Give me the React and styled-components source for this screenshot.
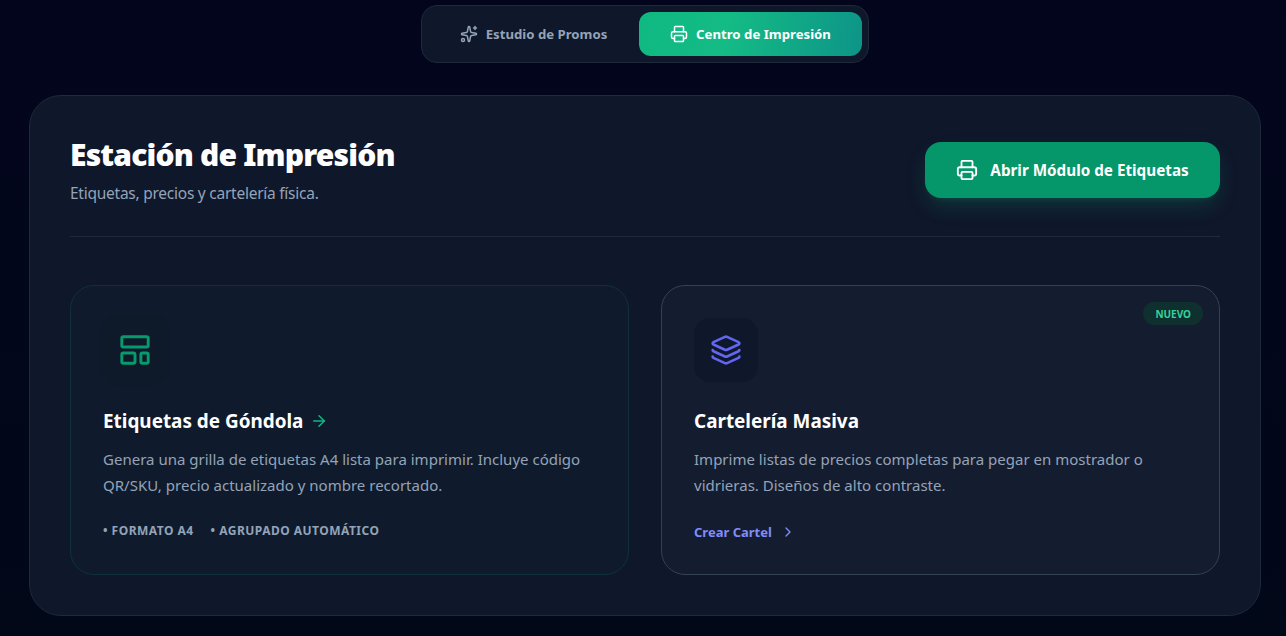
import React from "react";
import styled, { createGlobalStyle } from "styled-components";
import { Sparkles, Printer, Layers, ArrowRight, ChevronRight } from "lucide-react";

const GlobalStyle = createGlobalStyle`
  html, body {
    margin: 0;
    padding: 0;
    height: 100%;
    background: linear-gradient(180deg, #03051d 0%, #010818 100%);
    font-family: "Noto Sans", "Open Sans", sans-serif;
    overflow: hidden;
  }
  * { box-sizing: border-box; }
`;

const Page = styled.div`
  height: 636px;
  padding: 5px 25px 0 29px;
  display: flex;
  flex-direction: column;
  align-items: center;
`;

const Tabs = styled.nav`
  width: 448px;
  height: 58px;
  padding: 6px;
  display: flex;
  border: 1px solid #1e293b;
  border-radius: 16px;
  background: #0f172a;
`;

const Tab = styled.button`
  flex: ${(p) => (p.$active ? "0 0 223px" : "1")};
  display: flex;
  align-items: center;
  justify-content: center;
  gap: 8px;
  border: 0;
  border-radius: 12px;
  font: 700 13.2px "Noto Sans", sans-serif;
  color: ${(p) => (p.$active ? "#fff" : "#94a3b8")};
  background: ${(p) => (p.$active ? "linear-gradient(100deg, #10b981 0%, #14bb85 40%, #0d9488 100%)" : "transparent")};
`;

const Panel = styled.main`
  width: 1232px;
  height: 521px;
  margin-top: 32px;
  padding: 40px;
  border: 1px solid #1e293b;
  border-radius: 32px;
  background: #0f172a;
`;

const Header = styled.header`
  height: 101px;
  padding-top: 6px;
  display: flex;
  justify-content: space-between;
  align-items: flex-start;
  border-bottom: 1px solid #1e293b;
`;

const Title = styled.h1`
  margin: -5px 0 0;
  font-size: 30px;
  line-height: 36px;
  font-weight: 900;
  letter-spacing: -0.82px;
  color: #fff;
`;

const Subtitle = styled.p`
  margin: 8px 0 0;
  font-size: 15.5px;
  line-height: 24px;
  letter-spacing: -0.25px;
  color: #94a3b8;
`;

const PrimaryButton = styled.button`
  width: 295px;
  height: 56px;
  display: flex;
  align-items: center;
  justify-content: center;
  gap: 12px;
  border: 0;
  border-radius: 16px;
  background: #059669;
  color: #fff;
  font: 700 15.25px "Noto Sans", sans-serif;
  box-shadow: 0 10px 22px -3px rgba(16, 185, 129, 0.2), 0 4px 6px -4px rgba(16, 185, 129, 0.2);
`;

const Cards = styled.section`
  margin-top: 48px;
  display: grid;
  grid-template-columns: 559px 559px;
  gap: 32px;
`;

const Card = styled.article`
  position: relative;
  height: 290px;
  padding: 32px;
  border-radius: 24px;
  border: 1px solid ${(p) => (p.$accent ? "#334155" : "#10303a")};
  background: ${(p) => (p.$accent ? "#141d2f" : "#0f1b2d")};
`;

const IconBox = styled.div`
  width: 64px;
  height: 64px;
  display: flex;
  align-items: center;
  justify-content: center;
  border-radius: 16px;
  background: ${(p) => (p.$hovered ? "#0e192a" : "#0f172a")};
  color: ${(p) => p.$color};
  transform: ${(p) => (p.$hovered ? "scale(1.1)" : "none")};
`;

const CardTitle = styled.h2`
  margin: 24px 0 0;
  display: flex;
  align-items: center;
  gap: 7px;
  font-size: 18.9px;
  line-height: 30px;
  font-weight: 700;
  color: #fff;
`;

const CardText = styled.p`
  margin: 10px 0 0;
  font-size: 15px;
  line-height: 26px;
  letter-spacing: 0.01px;
  color: #94a3b8;
`;

const Meta = styled.div`
  margin-top: 25px;
  display: flex;
  gap: 17px;
  font-size: 12px;
  line-height: 16px;
  font-weight: 700;
  letter-spacing: 0.48px;
  color: #94a3b8;
`;

const CardLink = styled.div`
  margin-top: 25px;
  display: flex;
  align-items: center;
  gap: 8px;
  font-size: 13px;
  line-height: 18px;
  font-weight: 700;
  color: #818cf8;
`;

const Badge = styled.span`
  position: absolute;
  top: 16px;
  right: 16px;
  padding: 0 12px;
  height: 23px;
  display: flex;
  align-items: center;
  border-radius: 12px;
  background: #10302f;
  color: #34d399;
  font-size: 10px;
  font-weight: 700;
`;

const LayoutIcon = () => (
  <svg width="32" height="32" viewBox="0 0 24 24" fill="none" stroke="currentColor" strokeWidth="2" strokeLinecap="round" strokeLinejoin="round">
    <rect x="3" y="3" width="18" height="7" rx="1" />
    <rect x="3" y="14" width="9" height="7" rx="1" />
    <rect x="16" y="14" width="5" height="7" rx="1" />
  </svg>
);

export default function App() {
  return (
    <>
      <GlobalStyle />
      <Page>
        <Tabs>
          <Tab>
            <Sparkles size={18} />
            Estudio de Promos
          </Tab>
          <Tab $active>
            <Printer size={18} />
            Centro de Impresión
          </Tab>
        </Tabs>
        <Panel>
          <Header>
            <div>
              <Title>Estación de Impresión</Title>
              <Subtitle>Etiquetas, precios y cartelería física.</Subtitle>
            </div>
            <PrimaryButton>
              <Printer size={22} />
              Abrir Módulo de Etiquetas
            </PrimaryButton>
          </Header>
          <Cards>
            <Card>
              <IconBox $color="#069a6c" $hovered>
                <LayoutIcon />
              </IconBox>
              <CardTitle>
                Etiquetas de Góndola
                <ArrowRight size={18} color="#10b981" />
              </CardTitle>
              <CardText>
                Genera una grilla de etiquetas A4 lista para imprimir. Incluye código QR/SKU, precio actualizado y nombre recortado.
              </CardText>
              <Meta>
                <span>• FORMATO A4</span>
                <span>• AGRUPADO AUTOMÁTICO</span>
              </Meta>
            </Card>
            <Card $accent>
              <Badge>NUEVO</Badge>
              <IconBox $color="#6366f1">
                <Layers size={32} />
              </IconBox>
              <CardTitle>Cartelería Masiva</CardTitle>
              <CardText>
                Imprime listas de precios completas para pegar en mostrador o vidrieras. Diseños de alto contraste.
              </CardText>
              <CardLink>
                Crear Cartel
                <ChevronRight size={16} />
              </CardLink>
            </Card>
          </Cards>
        </Panel>
      </Page>
    </>
  );
}
